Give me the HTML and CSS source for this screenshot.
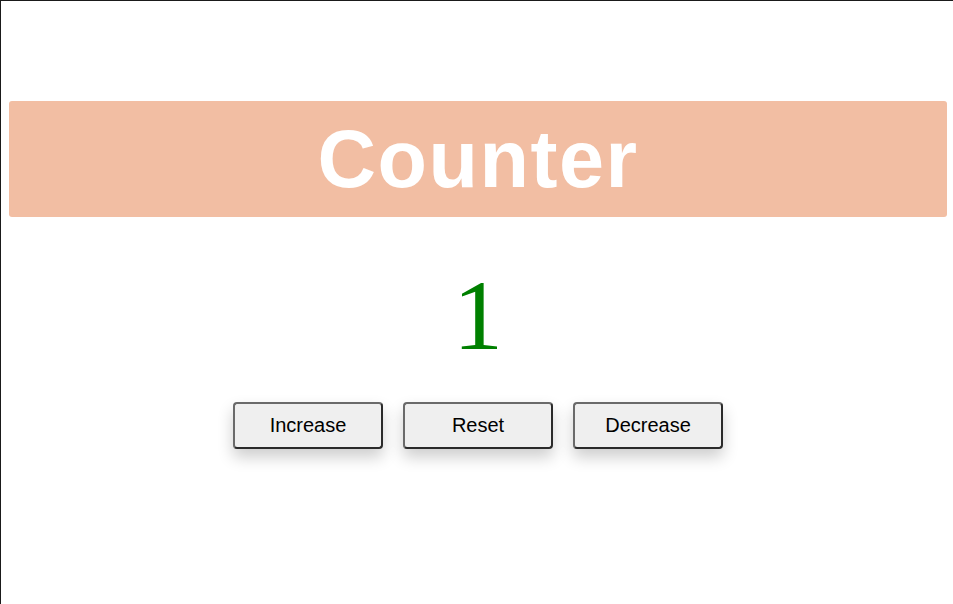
FILE: index.html
```html
<!DOCTYPE html>
<html>
<head>
<meta charset="utf-8">
<link rel="stylesheet" href="styles.css">
</head>
<body>
<div class="page">
  <h1 class="title">Counter</h1>
  <div class="count">1</div>
  <div class="buttons">
    <button class="btn">Increase</button>
    <button class="btn">Reset</button>
    <button class="btn">Decrease</button>
  </div>
</div>
</body>
</html>
```
FILE: styles.css
```css
html, body {
  margin: 0;
  padding: 0;
  background: #fff;
}
.page {
  box-sizing: border-box;
  height: 604px;
  border-top: 1px solid #1a1a1a;
  border-left: 1px solid #1a1a1a;
  padding: 100px 6px 0 8px;
  display: flex;
  flex-direction: column;
  align-items: stretch;
}
.title {
  margin: 0;
  height: 116px;
  background: #f2bea3;
  border-radius: 3px;
  color: #fff;
  font-family: "Liberation Sans", Arial, sans-serif;
  font-weight: bold;
  font-size: 81px;
  letter-spacing: 1.5px;
  line-height: 116px;
  text-align: center;
}
.count {
  margin-top: 39px;
  font-family: "Liberation Serif", "Times New Roman", serif;
  font-size: 100px;
  line-height: 120px;
  color: #008000;
  text-align: center;
}
.buttons {
  margin-top: 26px;
  display: flex;
  justify-content: center;
  gap: 20px;
}
.btn {
  box-sizing: border-box;
  width: 150px;
  height: 47px;
  background: #efefef;
  border: 2px solid;
  border-color: #6a6a6a #2a2a2a #2a2a2a #6a6a6a;
  border-radius: 4px;
  font-family: "Liberation Sans", Arial, sans-serif;
  font-size: 20px;
  color: #000;
  box-shadow: 0 8px 16px rgba(0, 0, 0, 0.2);
  padding: 0;
}
```
